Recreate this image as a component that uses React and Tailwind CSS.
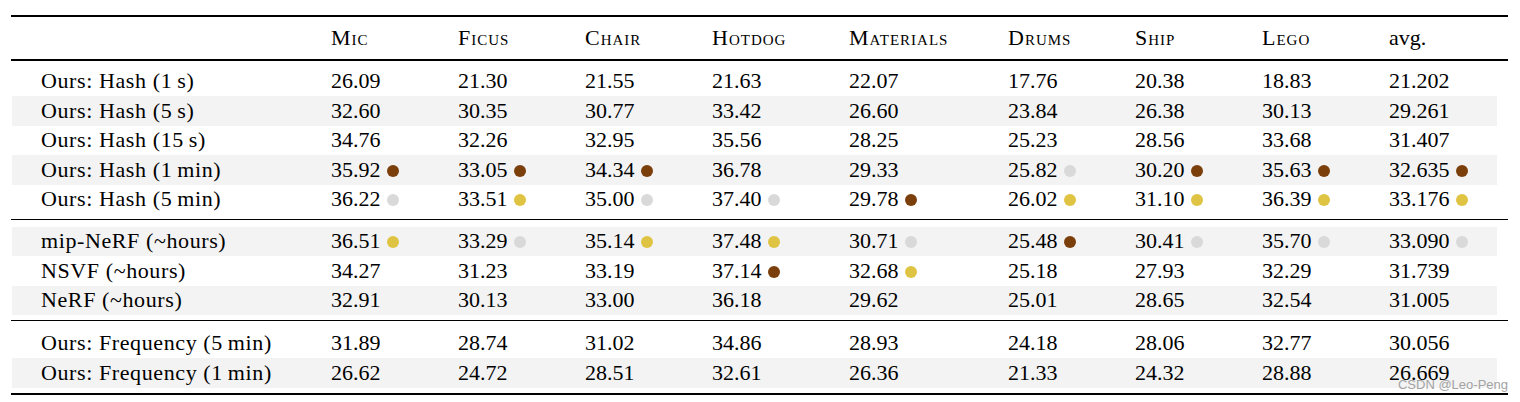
const cols = ["Mic", "Ficus", "Chair", "Hotdog", "Materials", "Drums", "Ship", "Lego"];

const dotColor = {
  b: "bg-[#7b3f0c]",
  s: "bg-[#d9d9d9]",
  g: "bg-[#dfc443]",
};

// value or [value, medal]
const groups = [
  [
    { label: "Ours: Hash (1\u2009s)", vals: ["26.09", "21.30", "21.55", "21.63", "22.07", "17.76", "20.38", "18.83", "21.202"] },
    { label: "Ours: Hash (5\u2009s)", shade: true, vals: ["32.60", "30.35", "30.77", "33.42", "26.60", "23.84", "26.38", "30.13", "29.261"] },
    { label: "Ours: Hash (15\u2009s)", vals: ["34.76", "32.26", "32.95", "35.56", "28.25", "25.23", "28.56", "33.68", "31.407"] },
    {
      label: "Ours: Hash (1\u2009min)",
      shade: true,
      vals: [["35.92", "b"], ["33.05", "b"], ["34.34", "b"], "36.78", "29.33", ["25.82", "s"], ["30.20", "b"], ["35.63", "b"], ["32.635", "b"]],
    },
    {
      label: "Ours: Hash (5\u2009min)",
      vals: [["36.22", "s"], ["33.51", "g"], ["35.00", "s"], ["37.40", "s"], ["29.78", "b"], ["26.02", "g"], ["31.10", "g"], ["36.39", "g"], ["33.176", "g"]],
    },
  ],
  [
    {
      label: "mip-NeRF (~hours)",
      shade: true,
      vals: [["36.51", "g"], ["33.29", "s"], ["35.14", "g"], ["37.48", "g"], ["30.71", "s"], ["25.48", "b"], ["30.41", "s"], ["35.70", "s"], ["33.090", "s"]],
    },
    {
      label: "NSVF (~hours)",
      vals: ["34.27", "31.23", "33.19", ["37.14", "b"], ["32.68", "g"], "25.18", "27.93", "32.29", "31.739"],
    },
    { label: "NeRF (~hours)", shade: true, vals: ["32.91", "30.13", "33.00", "36.18", "29.62", "25.01", "28.65", "32.54", "31.005"] },
  ],
  [
    { label: "Ours: Frequency (5\u2009min)", vals: ["31.89", "28.74", "31.02", "34.86", "28.93", "24.18", "28.06", "32.77", "30.056"] },
    { label: "Ours: Frequency (1\u2009min)", shade: true, vals: ["26.62", "24.72", "28.51", "32.61", "26.36", "21.33", "24.32", "28.88", "26.669"] },
  ],
];

const grid = "grid grid-cols-[319px_127px_127px_127px_137px_159px_127px_127px_127px_108px] w-[1485px] ml-px";

function Cell({ v }) {
  const [num, medal] = Array.isArray(v) ? v : [v, null];
  return (
    <div className="whitespace-nowrap">
      {num}
      {medal && <span className={`inline-block w-3 h-3 rounded-full ml-[6px] align-baseline ${dotColor[medal]}`} />}
    </div>
  );
}

function Row({ row, tall }) {
  return (
    <div className={`${grid} ${tall ? "h-[30px]" : "h-[29.5px]"} items-center ${row.shade ? "bg-[#f3f3f3]" : ""}`}>
      <div className="pl-[29px] tracking-[0.6px] whitespace-nowrap">{row.label}</div>
      {row.vals.map((v, i) => (
        <Cell key={i} v={v} />
      ))}
    </div>
  );
}

export default function App() {
  return (
    <div className="bg-white w-[1520px] h-[402px] pt-[15px]">
      <div className="relative ml-[11px] w-[1497px] text-[22px] leading-none text-black font-['Liberation_Serif',serif]">
        <div className="h-[2px] bg-black" />
        <div className={`${grid} h-[42px] items-center`}>
          <div />
          {cols.map((c) => (
            <div key={c} className="[font-variant:small-caps] tracking-[1px]">{c}</div>
          ))}
          <div>avg.</div>
        </div>
        <div className="h-[1.5px] bg-black" />

        <div className="pt-[6px] pb-[4.5px]">
          {groups[0].map((r) => <Row key={r.label} row={r} />)}
        </div>
        <div className="h-px bg-black" />
        <div className="pt-[7px] pb-[5px]">
          {groups[1].map((r) => <Row key={r.label} row={r} />)}
        </div>
        <div className="h-px bg-black" />
        <div className="pt-[6.5px] pb-[5px]">
          {groups[2].map((r) => <Row key={r.label} row={r} tall />)}
        </div>
        <div className="h-[2px] bg-black" />

        <div className="absolute right-0 bottom-[4px] text-[13px] leading-none text-[#a3a3a3] font-['Liberation_Sans',sans-serif]">
          CSDN @Leo-Peng
        </div>
      </div>
    </div>
  );
}
